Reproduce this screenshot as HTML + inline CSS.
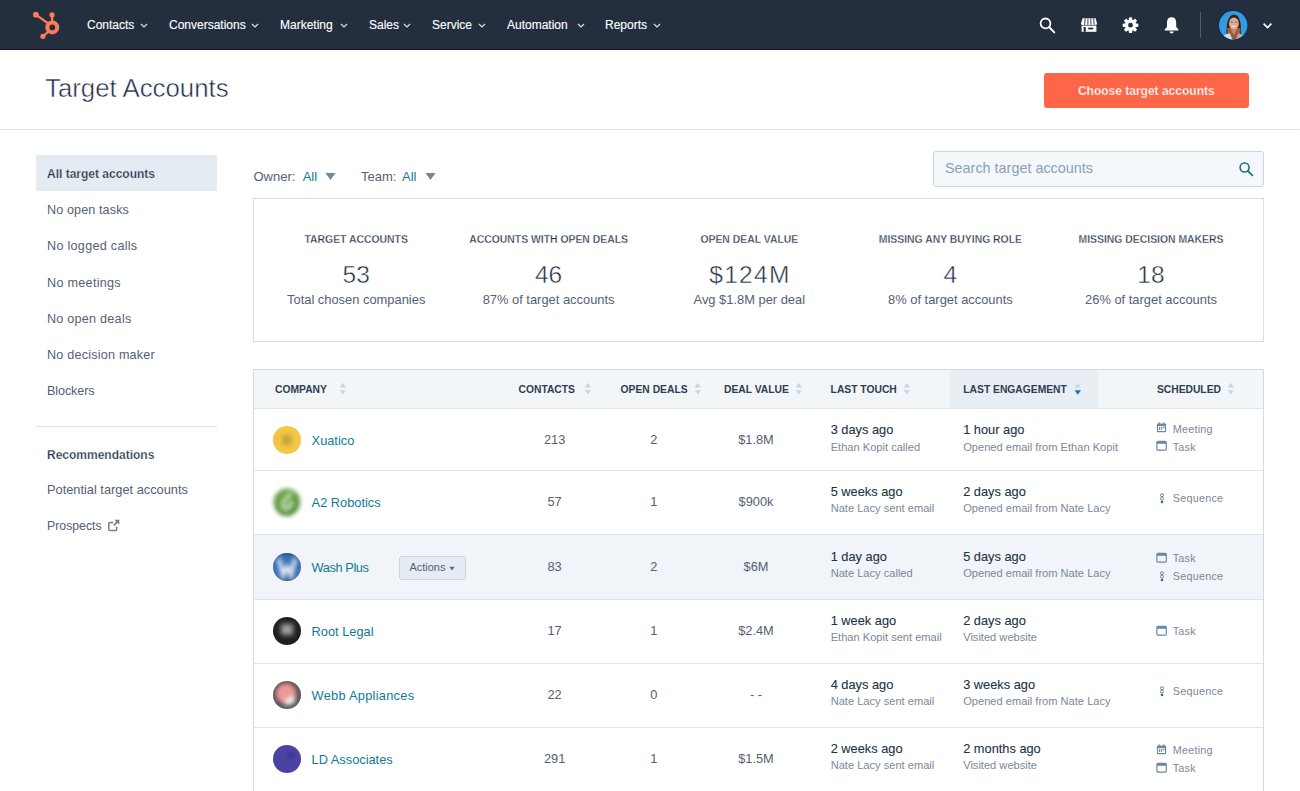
<!DOCTYPE html>
<html><head><meta charset="utf-8">
<style>
*{margin:0;padding:0;box-sizing:border-box}
html,body{width:1300px;height:791px;overflow:hidden;background:#fff;font-family:"Liberation Sans",sans-serif;color:#33475b}
.abs{position:absolute}
.t{position:absolute;white-space:nowrap;line-height:1}
.nav{color:#fff;-webkit-text-stroke:0.12px #fff}
.med{-webkit-text-stroke:0.1px currentColor}
.b{font-weight:bold}
.lnk{color:#0f7b96}
.sub{color:#7a8899}
.gray{color:#536172}
.dark{color:#213343}
</style></head><body>
<div class="abs" style="left:0;top:0;width:1300px;height:49px;background:#232f3e"></div>
<div class="abs" style="left:0;top:49px;width:1300px;height:1px;background:#111821"></div>
<svg class="abs" style="left:28px;top:6px" width="40" height="38" viewBox="0 0 40 38">
<g fill="#ff7a59" stroke="#ff7a59" stroke-linecap="round">
<line x1="7.9" y1="8.7" x2="21" y2="18" stroke-width="2.2"/>
<line x1="24" y1="8.9" x2="24.2" y2="16" stroke-width="2.2"/>
<line x1="14.9" y1="30.3" x2="20.5" y2="25.5" stroke-width="2.2"/>
<circle cx="7.9" cy="8.7" r="2.9" stroke="none"/>
<circle cx="24" cy="8.9" r="2.6" stroke="none"/>
<circle cx="14.9" cy="30.3" r="2.6" stroke="none"/>
<circle cx="24.3" cy="21.4" r="4.95" fill="none" stroke-width="4.1"/>
</g></svg>
<div class="t nav" style="left:87px;top:18.84px;font-size:12px;">Contacts</div>
<svg class="abs" style="left:139.9px;top:23px" width="8" height="5" viewBox="0 0 8 5"><path d="M1 1 L4 4 L7 1" fill="none" stroke="#dfe6ee" stroke-width="1.1"/></svg>
<div class="t nav" style="left:169px;top:18.84px;font-size:12px;">Conversations</div>
<svg class="abs" style="left:250.6px;top:23px" width="8" height="5" viewBox="0 0 8 5"><path d="M1 1 L4 4 L7 1" fill="none" stroke="#dfe6ee" stroke-width="1.1"/></svg>
<div class="t nav" style="left:280px;top:18.84px;font-size:12px;">Marketing</div>
<svg class="abs" style="left:339.9px;top:23px" width="8" height="5" viewBox="0 0 8 5"><path d="M1 1 L4 4 L7 1" fill="none" stroke="#dfe6ee" stroke-width="1.1"/></svg>
<div class="t nav" style="left:369px;top:18.84px;font-size:12px;">Sales</div>
<svg class="abs" style="left:403.2px;top:23px" width="8" height="5" viewBox="0 0 8 5"><path d="M1 1 L4 4 L7 1" fill="none" stroke="#dfe6ee" stroke-width="1.1"/></svg>
<div class="t nav" style="left:432px;top:18.84px;font-size:12px;">Service</div>
<svg class="abs" style="left:477.8px;top:23px" width="8" height="5" viewBox="0 0 8 5"><path d="M1 1 L4 4 L7 1" fill="none" stroke="#dfe6ee" stroke-width="1.1"/></svg>
<div class="t nav" style="left:507px;top:18.84px;font-size:12px;">Automation</div>
<svg class="abs" style="left:576.5px;top:23px" width="8" height="5" viewBox="0 0 8 5"><path d="M1 1 L4 4 L7 1" fill="none" stroke="#dfe6ee" stroke-width="1.1"/></svg>
<div class="t nav" style="left:605px;top:18.84px;font-size:12px;">Reports</div>
<svg class="abs" style="left:653.2px;top:23px" width="8" height="5" viewBox="0 0 8 5"><path d="M1 1 L4 4 L7 1" fill="none" stroke="#dfe6ee" stroke-width="1.1"/></svg>
<svg class="abs" style="left:1036px;top:14px" width="22" height="22" viewBox="0 0 22 22">
<circle cx="9.5" cy="9.4" r="4.9" fill="none" stroke="#fff" stroke-width="1.8"/>
<line x1="13" y1="13" x2="18.3" y2="18.4" stroke="#fff" stroke-width="1.9" stroke-linecap="round"/>
</svg>
<svg class="abs" style="left:1079px;top:16px" width="20" height="18" viewBox="0 0 20 18">
<path d="M3.6 2.3 H16.6 L18 7.5 Q18 9 16.5 9 H3.5 Q2 9 2 7.5 Z" fill="#fff"/>
<path d="M6.2 2.3 L5.6 9 M9 2.3 L8.8 9 M11.8 2.3 L12 9 M14.6 2.3 L15.2 9" stroke="#232f3e" stroke-width="0.9"/>
<rect x="2.6" y="9.6" width="14.8" height="6.2" fill="#fff"/>
<rect x="4.6" y="11" width="2.2" height="4.8" fill="#232f3e"/>
<rect x="9.2" y="11.6" width="5" height="1.8" fill="#232f3e"/>
</svg>
<svg class="abs" style="left:1120px;top:15px" width="21" height="21" viewBox="0 0 21 21">
<g transform="translate(10.5 10.2)">
<g fill="#fff">
<rect x="-1.7" y="-7.9" width="3.4" height="15.8" rx="1.2"/>
<rect x="-1.7" y="-7.9" width="3.4" height="15.8" rx="1.2" transform="rotate(45)"/>
<rect x="-1.7" y="-7.9" width="3.4" height="15.8" rx="1.2" transform="rotate(90)"/>
<rect x="-1.7" y="-7.9" width="3.4" height="15.8" rx="1.2" transform="rotate(135)"/>
<circle r="5.6"/>
</g>
<circle r="2.4" fill="#232f3e"/>
</g></svg>
<svg class="abs" style="left:1162px;top:15px" width="20" height="20" viewBox="0 0 20 20">
<path d="M9.6 2.2 C5.6 2.2 5 5.2 5 8.2 V11 C5 12.8 3.6 13.6 2.7 14.6 Q2.3 15.5 3.3 15.6 H15.9 Q16.9 15.5 16.5 14.6 C15.6 13.6 14.2 12.8 14.2 11 V8.2 C14.2 5.2 13.6 2.2 9.6 2.2 Z" fill="#fff"/>
<path d="M7.6 16.5 A2 2 0 0 0 11.6 16.5 Z" fill="#fff"/>
</svg>
<div class="abs" style="left:1200px;top:12px;width:1px;height:26px;background:#4f5f73"></div>
<svg class="abs" style="left:1218px;top:10px" width="31" height="31" viewBox="0 0 31 31">
<defs><clipPath id="av"><circle cx="15.2" cy="15.2" r="14.2"/></clipPath><filter id="avb"><feGaussianBlur stdDeviation="0.6"/></filter></defs>
<circle cx="15.2" cy="15.2" r="15.2" fill="#0f2d52"/>
<g clip-path="url(#av)">
<rect width="31" height="31" fill="#309de2"/>
<g filter="url(#avb)">
<path d="M8.6 27 C8 17 9 5 16 4.6 C22.6 5 23.6 16 22.8 27 Z" fill="#3a2418"/>
<path d="M9 18 C9.5 24 10 27 12 29 L20 29 C22 26 22.5 22 22.5 18 Z" fill="#9a5a3a"/>
<ellipse cx="15.9" cy="13.6" rx="4.9" ry="6.2" fill="#dcae92"/>
<path d="M12.5 19.5 L15.9 25 L19.3 19.5 Z" fill="#c98a6a"/>
<path d="M3 31 C4 26 8 23 12 23.5 L15 31 Z" fill="#d8dbe6"/>
<path d="M28 31 C27 26 23 23.5 20 23.5 L17.5 31 Z" fill="#b9a6b0"/>
<rect x="13" y="11.6" width="1.5" height="1" fill="#5a3a2c"/><rect x="17.4" y="11.6" width="1.5" height="1" fill="#5a3a2c"/>
<path d="M13.6 15.8 Q15.9 18.2 18.3 15.8" fill="#f4eee8"/>
</g>
</g></svg>
<svg class="abs" style="left:1262px;top:22px" width="11" height="8" viewBox="0 0 11 8"><path d="M1.6 1.6 L5.5 5.5 L9.4 1.6" fill="none" stroke="#fff" stroke-width="1.6"/></svg>
<div class="abs" style="left:0;top:129px;width:1300px;height:1px;background:#dfe3eb"></div>
<div class="t " style="left:45px;top:76.26px;font-size:25.8px;color:#1c2b48;-webkit-text-stroke:0.5px #fff;">Target Accounts</div>
<div class="abs" style="left:1043.5px;top:72.5px;width:205.5px;height:35px;background:#fd6649;border-radius:3px"></div>
<div class="t b" style="left:846.3px;width:600px;text-align:center;top:84.84px;font-size:12px;color:#fff;-webkit-text-stroke:0.25px #fd6649;">Choose target accounts</div>
<div class="abs" style="left:36px;top:155px;width:180.5px;height:36px;background:#e4ebf3"></div>
<div class="t b dark" style="left:47px;top:167.84px;font-size:12px;-webkit-text-stroke:0.25px #e4ebf3;">All target accounts</div>
<div class="t gray" style="left:47px;top:204.33px;font-size:12.6px;letter-spacing:0.112px;">No open tasks</div>
<div class="t gray" style="left:47px;top:240.43px;font-size:12.6px;letter-spacing:0.290px;">No logged calls</div>
<div class="t gray" style="left:47px;top:276.53px;font-size:12.6px;letter-spacing:0.297px;">No meetings</div>
<div class="t gray" style="left:47px;top:312.63px;font-size:12.6px;letter-spacing:0.250px;">No open deals</div>
<div class="t gray" style="left:47px;top:348.73px;font-size:12.6px;letter-spacing:0.215px;">No decision maker</div>
<div class="t gray" style="left:47px;top:384.83px;font-size:12.6px;letter-spacing:-0.102px;">Blockers</div>
<div class="abs" style="left:36px;top:426px;width:181px;height:1px;background:#dfe3eb"></div>
<div class="t b dark" style="left:47px;top:448.84px;font-size:12px;-webkit-text-stroke:0.25px #fff;">Recommendations</div>
<div class="t gray" style="left:47px;top:483.66px;font-size:12.8px;">Potential target accounts</div>
<div class="t gray" style="left:47px;top:520.09px;font-size:12.3px;">Prospects</div>
<svg class="abs" style="left:107px;top:519px" width="13" height="13" viewBox="0 0 13 13">
<path d="M6.3 3.6 H2.8 Q1.8 3.6 1.8 4.6 V10.4 Q1.8 11.4 2.8 11.4 H8.6 Q9.6 11.4 9.6 10.4 V7.6" fill="none" stroke="#6f7f92" stroke-width="1.5"/>
<path d="M7.3 0.8 H12.3 V5.8 Z" fill="#6f7f92"/><path d="M10.8 2.4 L6.8 6.4" stroke="#6f7f92" stroke-width="1.7"/>
</svg>
<div class="t gray" style="left:253.5px;top:170.00px;font-size:13px;">Owner:</div>
<div class="t lnk" style="left:302.7px;top:170.00px;font-size:13px;">All</div>
<svg class="abs" style="left:325px;top:172px" width="11" height="9" viewBox="0 0 11 9"><path d="M0.5 1 H10.5 L5.5 8 Z" fill="#6a87a8"/></svg>
<div class="t gray" style="left:361px;top:170.00px;font-size:13px;">Team:</div>
<div class="t lnk" style="left:402px;top:170.00px;font-size:13px;">All</div>
<svg class="abs" style="left:424.5px;top:172px" width="11" height="9" viewBox="0 0 11 9"><path d="M0.5 1 H10.5 L5.5 8 Z" fill="#6a87a8"/></svg>
<div class="abs" style="left:933px;top:151px;width:331px;height:36px;background:#f5f8fa;border:1px solid #cbd6e2;border-radius:3px"></div>
<div class="t " style="left:945px;top:161.31px;font-size:14.4px;color:#8aa0b8;">Search target accounts</div>
<svg class="abs" style="left:1236px;top:160px" width="20" height="20" viewBox="0 0 20 20">
<circle cx="8.6" cy="7.5" r="4.5" fill="none" stroke="#1d6f80" stroke-width="1.6"/>
<line x1="11.8" y1="10.8" x2="16.3" y2="15.3" stroke="#1d6f80" stroke-width="1.7" stroke-linecap="round"/>
</svg>
<div class="abs" style="left:253px;top:198px;width:1011px;height:144px;border:1px solid #d6dde5"></div>
<div class="t b" style="left:56.19999999999999px;width:600px;text-align:center;top:234.80px;font-size:10.4px;color:#23334a;-webkit-text-stroke:0.3px #fff;">TARGET ACCOUNTS</div>
<div class="t " style="left:56.19999999999999px;width:600px;text-align:center;top:262.76px;font-size:24.5px;color:#1f2e44;-webkit-text-stroke:0.45px #fff;">53</div>
<div class="t gray" style="left:56.19999999999999px;width:600px;text-align:center;top:293.88px;font-size:12.9px;">Total chosen companies</div>
<div class="t b" style="left:248.60000000000002px;width:600px;text-align:center;top:234.80px;font-size:10.4px;color:#23334a;-webkit-text-stroke:0.3px #fff;">ACCOUNTS WITH OPEN DEALS</div>
<div class="t " style="left:248.60000000000002px;width:600px;text-align:center;top:262.76px;font-size:24.5px;color:#1f2e44;-webkit-text-stroke:0.45px #fff;">46</div>
<div class="t gray" style="left:248.60000000000002px;width:600px;text-align:center;top:293.88px;font-size:12.9px;">87% of target accounts</div>
<div class="t b" style="left:449.29999999999995px;width:600px;text-align:center;top:234.80px;font-size:10.4px;color:#23334a;-webkit-text-stroke:0.3px #fff;">OPEN DEAL VALUE</div>
<div class="t " style="left:449.94999999999993px;width:600px;text-align:center;top:262.76px;font-size:24.5px;color:#1f2e44;-webkit-text-stroke:0.45px #fff;letter-spacing:1.3px;">$124M</div>
<div class="t gray" style="left:449.29999999999995px;width:600px;text-align:center;top:293.88px;font-size:12.9px;">Avg $1.8M per deal</div>
<div class="t b" style="left:650.4px;width:600px;text-align:center;top:234.80px;font-size:10.4px;color:#23334a;-webkit-text-stroke:0.3px #fff;">MISSING ANY BUYING ROLE</div>
<div class="t " style="left:650.4px;width:600px;text-align:center;top:262.76px;font-size:24.5px;color:#1f2e44;-webkit-text-stroke:0.45px #fff;">4</div>
<div class="t gray" style="left:650.4px;width:600px;text-align:center;top:293.88px;font-size:12.9px;">8% of target accounts</div>
<div class="t b" style="left:851px;width:600px;text-align:center;top:234.80px;font-size:10.4px;color:#23334a;-webkit-text-stroke:0.3px #fff;">MISSING DECISION MAKERS</div>
<div class="t " style="left:851px;width:600px;text-align:center;top:262.76px;font-size:24.5px;color:#1f2e44;-webkit-text-stroke:0.45px #fff;">18</div>
<div class="t gray" style="left:851px;width:600px;text-align:center;top:293.88px;font-size:12.9px;">26% of target accounts</div>
<div class="abs" style="left:253px;top:369px;width:1011px;height:430px;border:1px solid #d3dae3;border-bottom:none"></div>
<div class="abs" style="left:254px;top:370px;width:1009px;height:38px;background:#f3f6f9"></div>
<div class="abs" style="left:950px;top:370px;width:148px;height:38px;background:#e9eef4"></div>
<div class="abs" style="left:254px;top:535px;width:1009px;height:63.5px;background:#f1f4f8"></div>
<div class="abs" style="left:254px;top:408px;width:1009px;height:1px;background:#dfe3eb"></div>
<div class="abs" style="left:254px;top:470px;width:1009px;height:1px;background:#dfe3eb"></div>
<div class="abs" style="left:254px;top:534px;width:1009px;height:1px;background:#dfe3eb"></div>
<div class="abs" style="left:254px;top:598.5px;width:1009px;height:1px;background:#dfe3eb"></div>
<div class="abs" style="left:254px;top:663px;width:1009px;height:1px;background:#dfe3eb"></div>
<div class="abs" style="left:254px;top:727px;width:1009px;height:1px;background:#dfe3eb"></div>
<div class="t b" style="left:275px;top:384.68px;font-size:10.3px;color:#2d3e50;">COMPANY</div>
<svg class="abs" style="left:338.5px;top:382px" width="8" height="14" viewBox="0 0 8 14"><path d="M0.6 5.4 L3.8 0.8 L7 5.4 Z" fill="#cbd6e2"/><path d="M0.6 8.2 L3.8 12.8 L7 8.2 Z" fill="#cbd6e2"/></svg>
<div class="t b" style="left:518.5px;top:384.68px;font-size:10.3px;color:#2d3e50;">CONTACTS</div>
<svg class="abs" style="left:583.9px;top:382px" width="8" height="14" viewBox="0 0 8 14"><path d="M0.6 5.4 L3.8 0.8 L7 5.4 Z" fill="#cbd6e2"/><path d="M0.6 8.2 L3.8 12.8 L7 8.2 Z" fill="#cbd6e2"/></svg>
<div class="t b" style="left:620.6px;top:384.68px;font-size:10.3px;color:#2d3e50;">OPEN DEALS</div>
<svg class="abs" style="left:694.0px;top:382px" width="8" height="14" viewBox="0 0 8 14"><path d="M0.6 5.4 L3.8 0.8 L7 5.4 Z" fill="#cbd6e2"/><path d="M0.6 8.2 L3.8 12.8 L7 8.2 Z" fill="#cbd6e2"/></svg>
<div class="t b" style="left:724px;top:384.68px;font-size:10.3px;color:#2d3e50;">DEAL VALUE</div>
<svg class="abs" style="left:794.5px;top:382px" width="8" height="14" viewBox="0 0 8 14"><path d="M0.6 5.4 L3.8 0.8 L7 5.4 Z" fill="#cbd6e2"/><path d="M0.6 8.2 L3.8 12.8 L7 8.2 Z" fill="#cbd6e2"/></svg>
<div class="t b" style="left:830.6px;top:384.68px;font-size:10.3px;color:#2d3e50;">LAST TOUCH</div>
<svg class="abs" style="left:902.5px;top:382px" width="8" height="14" viewBox="0 0 8 14"><path d="M0.6 5.4 L3.8 0.8 L7 5.4 Z" fill="#cbd6e2"/><path d="M0.6 8.2 L3.8 12.8 L7 8.2 Z" fill="#cbd6e2"/></svg>
<div class="t b" style="left:963.3px;top:384.68px;font-size:10.3px;color:#2d3e50;">LAST ENGAGEMENT</div>
<svg class="abs" style="left:1073.5px;top:382px" width="8" height="14" viewBox="0 0 8 14"><path d="M0.6 5.4 L3.8 0.8 L7 5.4 Z" fill="#cbd6e2"/><path d="M0.6 8.2 L3.8 12.8 L7 8.2 Z" fill="#0f7b96"/></svg>
<div class="t b" style="left:1156.9px;top:384.68px;font-size:10.3px;color:#2d3e50;">SCHEDULED</div>
<svg class="abs" style="left:1227.1px;top:382px" width="8" height="14" viewBox="0 0 8 14"><path d="M0.6 5.4 L3.8 0.8 L7 5.4 Z" fill="#cbd6e2"/><path d="M0.6 8.2 L3.8 12.8 L7 8.2 Z" fill="#cbd6e2"/></svg>
<svg class="abs" style="left:269px;top:422.20px" width="36" height="36" viewBox="-4 -4 36 36"><defs><filter id="bl0" x="-50%" y="-50%" width="200%" height="200%"><feGaussianBlur stdDeviation="2.2"/></filter><clipPath id="cp0"><circle cx="14" cy="14" r="14"/></clipPath></defs><circle cx="14" cy="14" r="14" fill="#f2c744"/><g clip-path="url(#cp0)" filter="url(#bl0)"><rect x="9" y="9" width="10" height="10" fill="#c8a53c"/><rect x="1" y="6" width="4" height="14" fill="#f7bf4a"/></g></svg>
<div class="t lnk" style="left:311.6px;top:435.36px;font-size:12.8px;">Xuatico</div>
<div class="t gray" style="left:254.60000000000002px;width:600px;text-align:center;top:434.46px;font-size:12.8px;">213</div>
<div class="t gray" style="left:353.70000000000005px;width:600px;text-align:center;top:434.46px;font-size:12.8px;">2</div>
<div class="t gray" style="left:456px;width:600px;text-align:center;top:434.46px;font-size:12.8px;">$1.8M</div>
<div class="t med dark" style="left:830.7px;top:424.16px;font-size:12.8px;">3 days ago</div>
<div class="t sub" style="left:830.7px;top:441.50px;font-size:11.1px;">Ethan Kopit called</div>
<div class="t med dark" style="left:963.2px;top:424.16px;font-size:12.8px;">1 hour ago</div>
<div class="t sub" style="left:963.2px;top:441.50px;font-size:11.1px;">Opened email from Ethan Kopit</div>
<div class="t sub" style="left:1172.7px;top:423.66px;font-size:10.8px;letter-spacing:0.25px;">Meeting</div>
<svg class="abs" style="left:1156px;top:422.3px" width="11" height="11" viewBox="0 0 11 11"><rect x="0.9" y="1.6" width="9.2" height="8.6" rx="1.2" fill="#6a87a8"/><rect x="2" y="4.2" width="7" height="4.8" fill="#fff"/><rect x="3" y="5" width="1" height="3" fill="#6a87a8"/><rect x="4.8" y="5" width="1" height="3" fill="#6a87a8"/><rect x="6.6" y="5" width="2" height="1.2" fill="#6a87a8"/><rect x="2.5" y="0.4" width="1.2" height="2.4" fill="#6a87a8"/><rect x="7.3" y="0.4" width="1.2" height="2.4" fill="#6a87a8"/></svg>
<div class="t sub" style="left:1172.7px;top:441.66px;font-size:10.8px;letter-spacing:0.25px;">Task</div>
<svg class="abs" style="left:1156px;top:440.3px" width="11" height="11" viewBox="0 0 11 11"><rect x="0.9" y="1.4" width="9.4" height="8.8" rx="1.2" fill="none" stroke="#6a87a8" stroke-width="1.2"/><rect x="0.9" y="1.4" width="9.4" height="2.4" fill="#6a87a8"/></svg>
<svg class="abs" style="left:269px;top:484.00px" width="36" height="36" viewBox="-4 -4 36 36"><defs><filter id="bl1" x="-50%" y="-50%" width="200%" height="200%"><feGaussianBlur stdDeviation="2"/></filter><clipPath id="cp1"><circle cx="14" cy="14" r="14"/></clipPath></defs><g filter="url(#bl1)"><circle cx="14" cy="14" r="13.4" fill="#6aa24c"/><path d="M4 18 Q6 26 14 26 Q20 26 22 20" fill="none" stroke="#4f8a37" stroke-width="4"/><path d="M19 5 Q13 9 10 16 Q9 21 13 21 Q17 20 19 13" fill="none" stroke="#c4dcae" stroke-width="3.2"/><path d="M21 6 L23 20" stroke="#5a9540" stroke-width="3"/></g></svg>
<div class="t lnk" style="left:311.6px;top:497.16px;font-size:12.8px;">A2 Robotics</div>
<div class="t gray" style="left:254.60000000000002px;width:600px;text-align:center;top:496.26px;font-size:12.8px;">57</div>
<div class="t gray" style="left:353.70000000000005px;width:600px;text-align:center;top:496.26px;font-size:12.8px;">1</div>
<div class="t gray" style="left:456px;width:600px;text-align:center;top:496.26px;font-size:12.8px;">$900k</div>
<div class="t med dark" style="left:830.7px;top:485.96px;font-size:12.8px;">5 weeks ago</div>
<div class="t sub" style="left:830.7px;top:503.30px;font-size:11.1px;">Nate Lacy sent email</div>
<div class="t med dark" style="left:963.2px;top:485.96px;font-size:12.8px;">2 days ago</div>
<div class="t sub" style="left:963.2px;top:503.30px;font-size:11.1px;">Opened email from Nate Lacy</div>
<div class="t sub" style="left:1172.7px;top:493.46px;font-size:10.8px;letter-spacing:0.25px;">Sequence</div>
<svg class="abs" style="left:1159px;top:493.1px" width="6" height="11" viewBox="0 0 6 11"><circle cx="3" cy="2.2" r="1.5" fill="none" stroke="#6a87a8" stroke-width="1"/><circle cx="3" cy="5.6" r="1.5" fill="none" stroke="#6a87a8" stroke-width="1"/><circle cx="3" cy="9" r="1.3" fill="#4a6280"/></svg>
<svg class="abs" style="left:269px;top:548.80px" width="36" height="36" viewBox="-4 -4 36 36"><defs><filter id="bl2" x="-50%" y="-50%" width="200%" height="200%"><feGaussianBlur stdDeviation="2.2"/></filter><clipPath id="cp2"><circle cx="14" cy="14" r="14"/></clipPath></defs><circle cx="14" cy="14" r="14" fill="#3c6fb4"/><g clip-path="url(#cp2)"><g filter="url(#bl2)"><path d="M6 6 L10 22 L14 14 L18 22 L22 6" fill="none" stroke="#e3e8f6" stroke-width="4"/><rect x="4" y="-2" width="20" height="4" fill="#1d4f92"/><rect x="4" y="26" width="20" height="4" fill="#1d4f92"/></g></g></svg>
<div class="t lnk" style="left:311.6px;top:561.96px;font-size:12.8px;letter-spacing:-0.42px;">Wash Plus</div>
<div class="t gray" style="left:254.60000000000002px;width:600px;text-align:center;top:561.06px;font-size:12.8px;">83</div>
<div class="t gray" style="left:353.70000000000005px;width:600px;text-align:center;top:561.06px;font-size:12.8px;">2</div>
<div class="t gray" style="left:456px;width:600px;text-align:center;top:561.06px;font-size:12.8px;">$6M</div>
<div class="t med dark" style="left:830.7px;top:550.76px;font-size:12.8px;">1 day ago</div>
<div class="t sub" style="left:830.7px;top:568.10px;font-size:11.1px;">Nate Lacy called</div>
<div class="t med dark" style="left:963.2px;top:550.76px;font-size:12.8px;">5 days ago</div>
<div class="t sub" style="left:963.2px;top:568.10px;font-size:11.1px;">Opened email from Nate Lacy</div>
<div class="t sub" style="left:1172.7px;top:552.86px;font-size:10.8px;letter-spacing:0.25px;">Task</div>
<svg class="abs" style="left:1156px;top:551.5px" width="11" height="11" viewBox="0 0 11 11"><rect x="0.9" y="1.4" width="9.4" height="8.8" rx="1.2" fill="none" stroke="#6a87a8" stroke-width="1.2"/><rect x="0.9" y="1.4" width="9.4" height="2.4" fill="#6a87a8"/></svg>
<div class="t sub" style="left:1172.7px;top:570.86px;font-size:10.8px;letter-spacing:0.25px;">Sequence</div>
<svg class="abs" style="left:1159px;top:570.5px" width="6" height="11" viewBox="0 0 6 11"><circle cx="3" cy="2.2" r="1.5" fill="none" stroke="#6a87a8" stroke-width="1"/><circle cx="3" cy="5.6" r="1.5" fill="none" stroke="#6a87a8" stroke-width="1"/><circle cx="3" cy="9" r="1.3" fill="#4a6280"/></svg>
<svg class="abs" style="left:269px;top:612.70px" width="36" height="36" viewBox="-4 -4 36 36"><defs><filter id="bl3" x="-50%" y="-50%" width="200%" height="200%"><feGaussianBlur stdDeviation="2.4"/></filter><clipPath id="cp3"><circle cx="14" cy="14" r="14"/></clipPath></defs><circle cx="14" cy="14" r="14" fill="#1f1f1f"/><g clip-path="url(#cp3)" filter="url(#bl3)"><rect x="8" y="7" width="12" height="11" fill="#a29d9f"/></g></svg>
<div class="t lnk" style="left:311.6px;top:625.86px;font-size:12.8px;">Root Legal</div>
<div class="t gray" style="left:254.60000000000002px;width:600px;text-align:center;top:624.96px;font-size:12.8px;">17</div>
<div class="t gray" style="left:353.70000000000005px;width:600px;text-align:center;top:624.96px;font-size:12.8px;">1</div>
<div class="t gray" style="left:456px;width:600px;text-align:center;top:624.96px;font-size:12.8px;">$2.4M</div>
<div class="t med dark" style="left:830.7px;top:614.66px;font-size:12.8px;">1 week ago</div>
<div class="t sub" style="left:830.7px;top:632.00px;font-size:11.1px;">Ethan Kopit sent email</div>
<div class="t med dark" style="left:963.2px;top:614.66px;font-size:12.8px;">2 days ago</div>
<div class="t sub" style="left:963.2px;top:632.00px;font-size:11.1px;">Visited website</div>
<div class="t sub" style="left:1172.7px;top:626.06px;font-size:10.8px;letter-spacing:0.25px;">Task</div>
<svg class="abs" style="left:1156px;top:624.7px" width="11" height="11" viewBox="0 0 11 11"><rect x="0.9" y="1.4" width="9.4" height="8.8" rx="1.2" fill="none" stroke="#6a87a8" stroke-width="1.2"/><rect x="0.9" y="1.4" width="9.4" height="2.4" fill="#6a87a8"/></svg>
<svg class="abs" style="left:269px;top:676.70px" width="36" height="36" viewBox="-4 -4 36 36"><defs><filter id="bl4" x="-50%" y="-50%" width="200%" height="200%"><feGaussianBlur stdDeviation="2"/></filter><clipPath id="cp4"><circle cx="14" cy="14" r="14"/></clipPath></defs><circle cx="14" cy="14" r="14" fill="#5c5757"/><g clip-path="url(#cp4)" filter="url(#bl4)"><circle cx="13" cy="12.5" r="10" fill="#ef9898"/><ellipse cx="17" cy="20" rx="6" ry="3.5" fill="#f2eaea" transform="rotate(-30 17 20)"/></g></svg>
<div class="t lnk" style="left:311.6px;top:689.86px;font-size:12.8px;letter-spacing:0.27px;">Webb Appliances</div>
<div class="t gray" style="left:254.60000000000002px;width:600px;text-align:center;top:688.96px;font-size:12.8px;">22</div>
<div class="t gray" style="left:353.70000000000005px;width:600px;text-align:center;top:688.96px;font-size:12.8px;">0</div>
<div class="t gray" style="left:456px;width:600px;text-align:center;top:688.96px;font-size:12.8px;">- -</div>
<div class="t med dark" style="left:830.7px;top:678.66px;font-size:12.8px;">4 days ago</div>
<div class="t sub" style="left:830.7px;top:696.00px;font-size:11.1px;">Nate Lacy sent email</div>
<div class="t med dark" style="left:963.2px;top:678.66px;font-size:12.8px;">3 weeks ago</div>
<div class="t sub" style="left:963.2px;top:696.00px;font-size:11.1px;">Opened email from Nate Lacy</div>
<div class="t sub" style="left:1172.7px;top:686.16px;font-size:10.8px;letter-spacing:0.25px;">Sequence</div>
<svg class="abs" style="left:1159px;top:685.8px" width="6" height="11" viewBox="0 0 6 11"><circle cx="3" cy="2.2" r="1.5" fill="none" stroke="#6a87a8" stroke-width="1"/><circle cx="3" cy="5.6" r="1.5" fill="none" stroke="#6a87a8" stroke-width="1"/><circle cx="3" cy="9" r="1.3" fill="#4a6280"/></svg>
<svg class="abs" style="left:269px;top:741.10px" width="36" height="36" viewBox="-4 -4 36 36"><defs><filter id="bl5" x="-50%" y="-50%" width="200%" height="200%"><feGaussianBlur stdDeviation="1"/></filter><clipPath id="cp5"><circle cx="14" cy="14" r="14"/></clipPath></defs><circle cx="14" cy="14" r="14" fill="#4a43a3"/><g clip-path="url(#cp5)" filter="url(#bl5)"><ellipse cx="18" cy="10" rx="5" ry="3" fill="#3e3795"/></g></svg>
<div class="t lnk" style="left:311.6px;top:754.26px;font-size:12.8px;">LD Associates</div>
<div class="t gray" style="left:254.60000000000002px;width:600px;text-align:center;top:753.36px;font-size:12.8px;">291</div>
<div class="t gray" style="left:353.70000000000005px;width:600px;text-align:center;top:753.36px;font-size:12.8px;">1</div>
<div class="t gray" style="left:456px;width:600px;text-align:center;top:753.36px;font-size:12.8px;">$1.5M</div>
<div class="t med dark" style="left:830.7px;top:743.06px;font-size:12.8px;">2 weeks ago</div>
<div class="t sub" style="left:830.7px;top:760.40px;font-size:11.1px;">Nate Lacy sent email</div>
<div class="t med dark" style="left:963.2px;top:743.06px;font-size:12.8px;">2 months ago</div>
<div class="t sub" style="left:963.2px;top:760.40px;font-size:11.1px;">Visited website</div>
<div class="t sub" style="left:1172.7px;top:745.16px;font-size:10.8px;letter-spacing:0.25px;">Meeting</div>
<svg class="abs" style="left:1156px;top:743.8px" width="11" height="11" viewBox="0 0 11 11"><rect x="0.9" y="1.6" width="9.2" height="8.6" rx="1.2" fill="#6a87a8"/><rect x="2" y="4.2" width="7" height="4.8" fill="#fff"/><rect x="3" y="5" width="1" height="3" fill="#6a87a8"/><rect x="4.8" y="5" width="1" height="3" fill="#6a87a8"/><rect x="6.6" y="5" width="2" height="1.2" fill="#6a87a8"/><rect x="2.5" y="0.4" width="1.2" height="2.4" fill="#6a87a8"/><rect x="7.3" y="0.4" width="1.2" height="2.4" fill="#6a87a8"/></svg>
<div class="t sub" style="left:1172.7px;top:763.16px;font-size:10.8px;letter-spacing:0.25px;">Task</div>
<svg class="abs" style="left:1156px;top:761.8px" width="11" height="11" viewBox="0 0 11 11"><rect x="0.9" y="1.4" width="9.4" height="8.8" rx="1.2" fill="none" stroke="#6a87a8" stroke-width="1.2"/><rect x="0.9" y="1.4" width="9.4" height="2.4" fill="#6a87a8"/></svg>
<div class="abs" style="left:399px;top:555.5px;width:67px;height:24px;background:#e6ecf4;border:1px solid #c8d3df;border-radius:3px"></div>
<div class="t gray" style="left:409.4px;top:561.69px;font-size:11px;">Actions</div>
<svg class="abs" style="left:449px;top:565.5px" width="6" height="5" viewBox="0 0 6 5"><path d="M0.3 0.8 H5.7 L3 4.4 Z" fill="#516f90"/></svg>
</body></html>
